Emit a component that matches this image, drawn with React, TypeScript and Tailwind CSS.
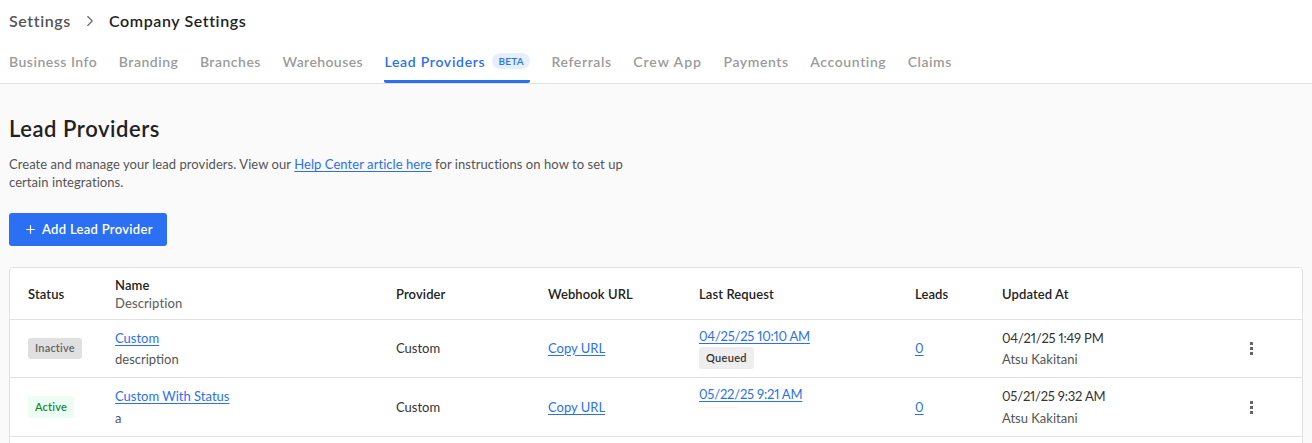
import { ChevronRight, Plus } from "lucide-react";

const TABS = [
  { label: "Business Info", track: "tracking-[0.5px]" },
  { label: "Branding", track: "tracking-[0.5px]" },
  { label: "Branches", track: "tracking-[0.5px]" },
  { label: "Warehouses", track: "tracking-[0.4px]" },
  { label: "Lead Providers", track: "tracking-[0.7px]" },
  { label: "Referrals", track: "tracking-[0.6px]" },
  { label: "Crew App", track: "tracking-[1px]" },
  { label: "Payments", track: "tracking-[0.6px]" },
  { label: "Accounting", track: "tracking-[0.6px]" },
  { label: "Claims", track: "tracking-[0.5px]" },
];

const COLS = "grid grid-cols-[87px_281px_152px_151px_216px_87px_1fr] items-center";

function Dots() {
  return (
    <div className="flex flex-col gap-[2px] mr-[49px]">
      <span className="h-[3px] w-[3px] bg-[#666]" />
      <span className="h-[3px] w-[3px] bg-[#666]" />
      <span className="h-[3px] w-[3px] bg-[#666]" />
    </div>
  );
}

function TextLink({ children }: { children: React.ReactNode }) {
  return <a className="text-[#2b6ff2] underline underline-offset-2">{children}</a>;
}

export default function App() {
  return (
    <div className="h-[443px] overflow-hidden bg-[#fafafa] font-['Lato',sans-serif] text-[#222]">
      <header className="h-[84px] bg-white border-b border-[#e2e2e2] px-[9px]">
        <div className="flex items-center h-[41px] pt-[1px] text-[16px] font-semibold tracking-[0.6px]">
          <span className="text-[#555]">Settings</span>
          <ChevronRight className="w-[18px] h-[18px] mx-[10px] text-[#666]" strokeWidth={1.5} />
          <span className="text-[#222]">Company Settings</span>
        </div>
        <nav className="flex gap-[21.5px] mt-[1px]">
          {TABS.map((t) =>
            t.label === "Lead Providers" ? (
              <div key={t.label} className="flex items-center h-[41px] border-b-[3px] border-[#2b6ff2] rounded-b-[2px] gap-[7px]">
                <span className={`text-[14px] font-semibold ${t.track} text-[#2b6ff2]`}>{t.label}</span>
                <span className="bg-[#e6f0fd] text-[#2b6ff2] text-[10px] font-semibold rounded-full px-[6px] h-[16px] leading-[16px] tracking-[0.3px]">BETA</span>
              </div>
            ) : (
              <div key={t.label} className={`flex items-center h-[41px] pb-[3px] text-[14px] font-semibold ${t.track} text-[#9b9b9b]`}>{t.label}</div>
            )
          )}
        </nav>
      </header>

      <main className="px-[9px] pt-[31px]">
        <h1 className="text-[22px] leading-[28px] font-semibold tracking-[0.55px] text-[#222]">Lead Providers</h1>
        <p className="mt-[12px] w-[640px] text-[13px] leading-[18px] tracking-[0.06px] text-[#555]">
          Create and manage your lead providers. View our <TextLink>Help Center article here</TextLink> for instructions on how to set up certain integrations.
        </p>
        <button className="mt-[22px] flex items-center h-[33px] w-[158px] pl-[15px] bg-[#2b6ff2] rounded-[3px] text-white text-[13px] font-semibold tracking-[0.3px]">
          <Plus className="w-[13px] h-[13px] mr-[5px]" strokeWidth={2.25} />
          Add Lead Provider
        </button>

        <div className="mt-[21px] bg-white border border-[#e2e2e2] rounded-[4px] text-[13px] leading-[18px] text-[#333] proportional-nums">
          <div className={`${COLS} h-[52px] pl-[18px] border-b border-[#e2e2e2] font-semibold tracking-[0.1px] text-[#222]`}>
            <span>Status</span>
            <div className="flex flex-col">
              <span>Name</span>
              <span className="text-[#666] font-medium">Description</span>
            </div>
            <span>Provider</span>
            <span>Webhook URL</span>
            <span>Last Request</span>
            <span>Leads</span>
            <span>Updated At</span>
          </div>

          <div className={`${COLS} h-[58px] pl-[18px] border-b border-[#e2e2e2]`}>
            <span className="w-fit h-[21px] px-[7px] rounded-[3px] bg-[#e0e0e0] text-[#666] text-[11px] leading-[19px] font-semibold tracking-[0.2px]">Inactive</span>
            <div className="flex flex-col items-start gap-[3px]">
              <TextLink>Custom</TextLink>
              <span className="text-[#555]">description</span>
            </div>
            <span className="-mt-[2px]">Custom</span>
            <div className="-mt-[2px]"><TextLink>Copy URL</TextLink></div>
            <div className="flex flex-col items-start gap-[2px] -mt-[1px]">
              <span className="tracking-[-0.22px]"><TextLink>04/25/25 10:10 AM</TextLink></span>
              <span className="h-[22px] px-[7px] rounded-[3px] bg-[#eeeeee] text-[11px] leading-[22px] font-semibold tracking-[0.3px]">Queued</span>
            </div>
            <div className="-mt-[2px]"><TextLink>0</TextLink></div>
            <div className="flex items-center justify-between">
              <div className="flex flex-col gap-[3px]">
                <span className="tracking-[-0.2px]">04/21/25 1:49 PM</span>
                <span className="text-[#555]">Atsu Kakitani</span>
              </div>
              <Dots />
            </div>
          </div>

          <div className={`${COLS} h-[59px] pl-[18px] border-b border-[#e2e2e2]`}>
            <span className="w-fit h-[22px] px-[7px] rounded-[3px] bg-[#edfdf3] text-[#16873f] text-[11px] leading-[22px] font-semibold tracking-[0.2px]">Active</span>
            <div className="flex flex-col items-start gap-[4px]">
              <TextLink>Custom With Status</TextLink>
              <span className="text-[#555]">a</span>
            </div>
            <span>Custom</span>
            <div><TextLink>Copy URL</TextLink></div>
            <div className="flex flex-col items-start gap-[4px] -mt-[22px]">
              <span className="tracking-[-0.2px]"><TextLink>05/22/25 9:21 AM</TextLink></span>
              <span className="h-px w-[38px] bg-[#fdf3ec]" />
            </div>
            <div><TextLink>0</TextLink></div>
            <div className="flex items-center justify-between">
              <div className="flex flex-col gap-[4px]">
                <span className="tracking-[-0.2px]">05/21/25 9:32 AM</span>
                <span className="text-[#555]">Atsu Kakitani</span>
              </div>
              <Dots />
            </div>
          </div>
          <div className="h-[40px]" />
        </div>
      </main>
    </div>
  );
}
